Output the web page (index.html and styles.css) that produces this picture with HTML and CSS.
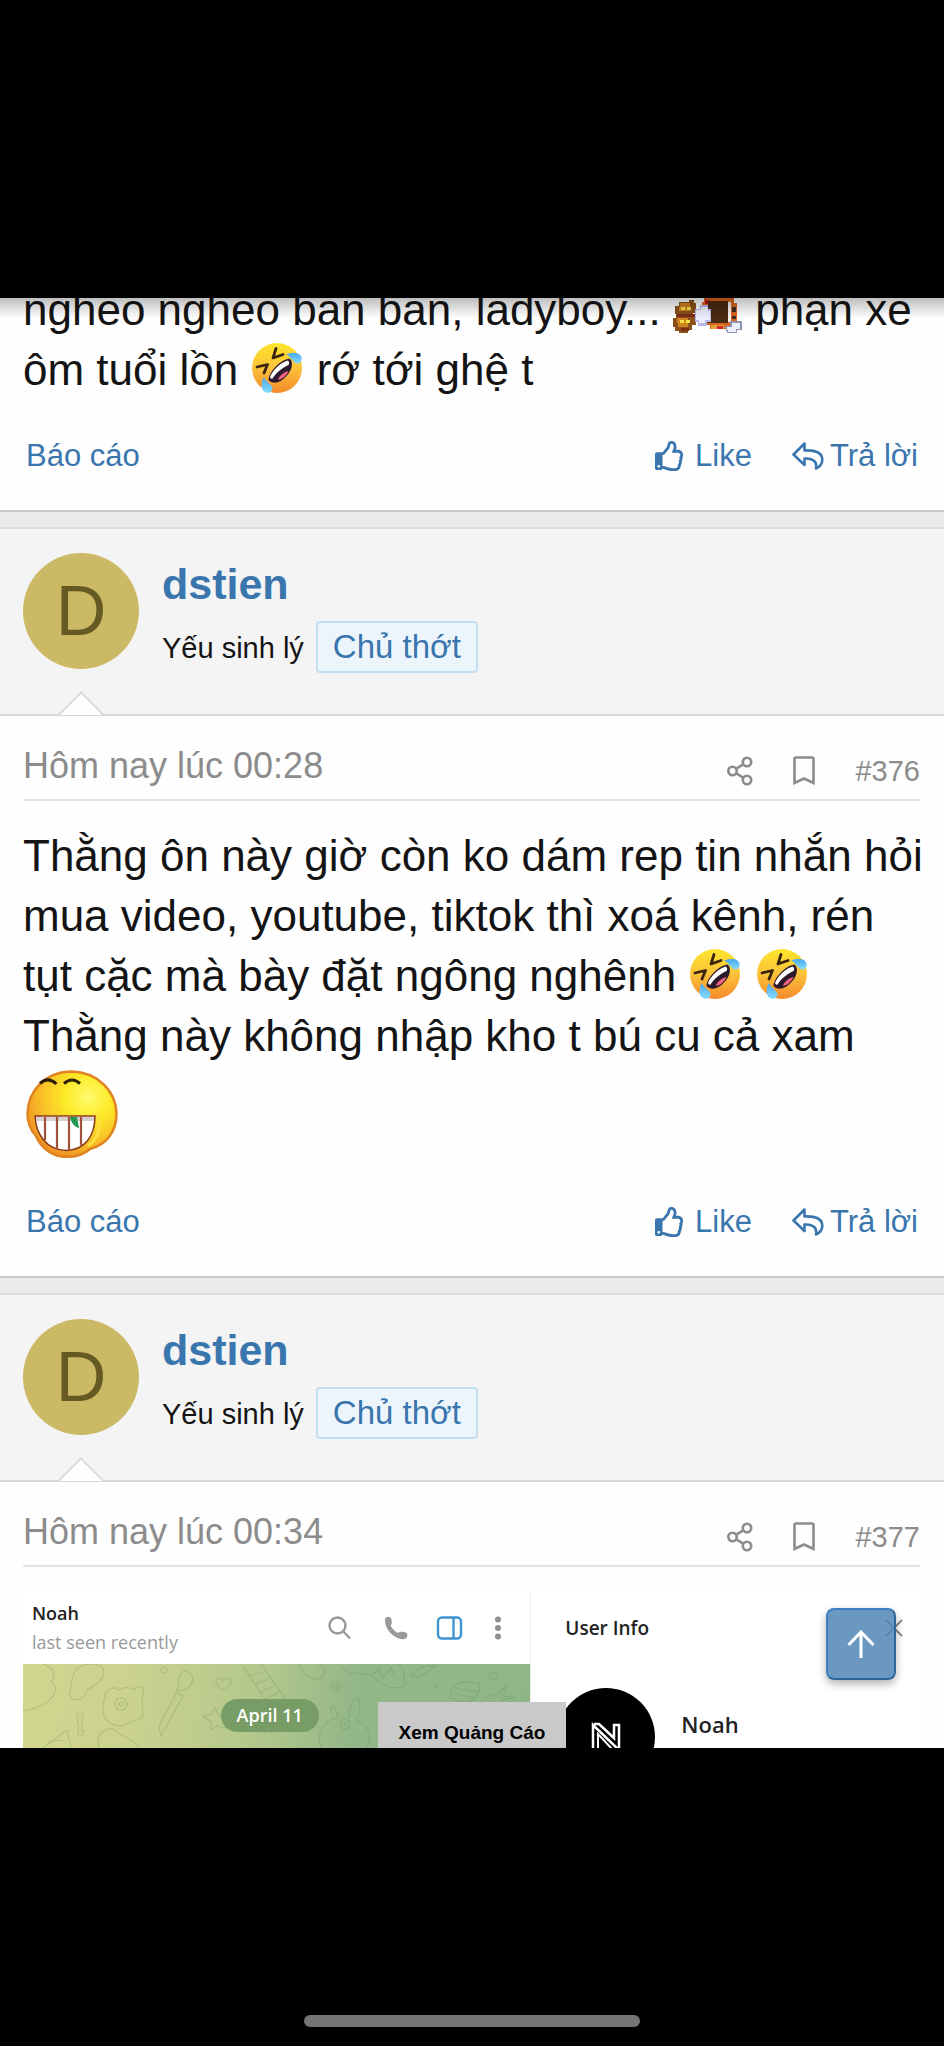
FILE: index.html
```
<!DOCTYPE html>
<html lang="vi">
<head>
    <meta charset="UTF-8">
    <meta name="viewport" content="width=device-width, initial-scale=1">
    <title>Thread</title>
    <link rel="stylesheet" href="styles.css">
</head>
<body>
    <!-- Shared icons -->
    <svg class="sprite" aria-hidden="true">
        <defs>
            <linearGradient id="faceFill" x1="0" y1="0" x2="0" y2="1">
                <stop offset="0" stop-color="#fee52c"/>
                <stop offset="0.5" stop-color="#fbc23a"/>
                <stop offset="1" stop-color="#f58a2c"/>
            </linearGradient>
            <linearGradient id="tearFill" x1="0" y1="0" x2="0" y2="1">
                <stop offset="0" stop-color="#4aa8ee"/>
                <stop offset="1" stop-color="#86dcfb"/>
            </linearGradient>
            <radialGradient id="grinFill" cx="0.68" cy="0.3" r="0.75">
                <stop offset="0" stop-color="#fffc6e"/>
                <stop offset="0.35" stop-color="#fdea28"/>
                <stop offset="0.75" stop-color="#f8b928"/>
                <stop offset="1" stop-color="#ee9324"/>
            </radialGradient>
        </defs>
        <symbol id="rofl" viewBox="0 0 50 50">
            <circle cx="25" cy="25" r="25" fill="url(#faceFill)"/>
            <path d="M24 5.500L21 15L31 11.500M5 24L15.500 21.500L12 30" fill="none" stroke="#3a2410" stroke-width="2.800" stroke-linejoin="round" stroke-linecap="round"/>
            <path d="M16.500 37C17 29 28 17 37.500 15.500C42 19 40 28 34 33.500C29 39.500 21 42 16.500 37Z" fill="#2b1a2e"/>
            <path d="M18 34C21 27 28 19.500 36 17.500C37.500 19 37.500 20.500 36.500 22C31 24 24 30 20.500 35.500C19.500 36 18.500 35.500 18 34Z" fill="#fff"/>
            <path d="M26 37C27 32.500 32 29 36.500 28C34.500 32.500 31 36 26 37Z" fill="#f0657d"/>
            <path d="M34 11.500C37 10 44 9 47.500 11.500C51 14 50 20 46 20.500C41 21 40 14 34 11.500Z" fill="url(#tearFill)"/>
            <path d="M12 34C9.500 37 8.500 45 11.500 48C14.500 51 20 50 20.500 46C21 41 14 40 12 34Z" fill="url(#tearFill)"/>
        </symbol>
        <symbol id="thumb" viewBox="0 0 512 512">
            <path d="M466.27 286.69C475.04 271.84 480 256 480 236.85c0-44.015-37.218-85.58-85.82-85.58H357.7c4.92-12.81 8.85-28.13 8.85-46.54C366.55 31.936 328.86 0 271.28 0c-61.607 0-58.093 94.933-71.76 108.6-22.747 22.747-49.615 66.447-68.76 83.4H32c-17.673 0-32 14.327-32 32v240c0 17.673 14.327 32 32 32h64c14.893 0 27.408-10.174 30.978-23.95 44.509 1.001 75.06 39.94 177.802 39.94 7.22 0 15.22.01 22.22.01 77.117 0 111.986-39.423 112.94-95.33 13.319-18.425 20.299-43.122 17.34-66.99 9.854-18.452 13.664-40.343 8.99-62.99zm-61.75 53.83c12.56 21.13 1.26 49.41-13.94 57.57 7.7 48.78-17.608 65.9-53.12 65.9h-37.82c-71.639 0-118.029-37.82-171.64-37.82V240h10.92c28.36 0 67.98-70.89 94.54-97.46 28.36-28.36 18.91-75.63 37.82-94.54 47.27 0 47.27 32.98 47.27 56.73 0 39.17-28.36 56.72-28.36 94.54h103.99c21.11 0 37.73 18.91 37.82 37.82.09 18.9-12.82 37.81-22.27 37.81 13.489 14.555 16.371 45.236-5.21 65.62zM88 432c0 13.255-10.745 24-24 24s-24-10.745-24-24 10.745-24 24-24 24 10.745 24 24z" fill="currentColor"/>
            <path d="M20 215H105V400H20Z" fill="currentColor"/>
        </symbol>
        <symbol id="reply" viewBox="0 0 32 28">
            <path d="M12.500 1.500L1.500 12.500L12.500 23V16.500C20 16 25.500 19 24 26.500C28.500 24.500 31 20.500 30 15.500C28.500 9.500 21 8 12.500 8.500Z" fill="none" stroke="currentColor" stroke-width="2.600" stroke-linejoin="round"/>
        </symbol>
        <symbol id="share" viewBox="0 0 26 30">
            <g fill="none" stroke="currentColor" stroke-width="2.600">
                <circle cx="5.500" cy="15" r="4.200"/>
                <circle cx="20" cy="6" r="4.200"/>
                <circle cx="20" cy="24" r="4.200"/>
                <path d="M9 12.800L16.500 8.200M9 17.200L16.500 21.800"/>
            </g>
        </symbol>
        <symbol id="bookmark" viewBox="0 0 22 30">
            <path d="M1.500 27V3Q1.500 1.500 3 1.500H19Q20.500 1.500 20.500 3V27L11 22.500Z" fill="none" stroke="currentColor" stroke-width="2.600"/>
        </symbol>
    </svg>

    <div class="screen">
        <div class="bar"></div>

        <main class="page">
            <!-- Post 375, scrolled partly out of view -->
            <article class="post post-first">
                <div class="message">
                    ngheo ngheo ban ban, ladyboy...
                    <svg class="smilie-pixel" viewBox="0 0 70 44" shape-rendering="crispEdges">
                        <path d="M6 12h10v-2h5v3h2v10h-3v2h3v10h-4v5h-4v3h-9v-2h-4v-4h-2v-9h3v-4h-1v-8h4z" fill="#8a5218"/>
                        <path d="M7 13h10v8h-11zM4 28h11v9h-10z" fill="#cf8420"/>
                        <path d="M4 24h18v3h-18zM8 38h8v3h-8z" fill="#7b2a16"/>
                        <path d="M8 17h4v3h-4zM14 17h4v3h-4zM7 30h4v3h-4zM13 30h4v3h-4z" fill="#f5e04a"/>
                        <path d="M31 8h30v5h3v18h-4v8h-23v-4h-3v-19h-5v-4h2z" fill="#d8661c"/>
                        <path d="M32 10h4v4h-4zM34 30h4v3h-4z" fill="#c2181c"/>
                        <path d="M35 11h20v22h-20z" fill="#4a2a12"/>
                        <path d="M55 12h3v20h-3z" fill="#f6f2ee"/>
                        <path d="M59 17h4v5h-4zM59 26h4v3h-4z" fill="#3d2c28"/>
                        <path d="M38 35h13v4h-13z" fill="#e8a03c"/>
                        <path d="M44 36h6v3h-6z" fill="#d3222a"/>
                        <path d="M22 19h5v-4h8v4h3v13h-4v4h-9v-4h-3z" fill="#b4b8ea"/>
                        <path d="M23 20h5v-3h7v4h2v9h-5v3h-6v-3h-3z" fill="#eceefc"/>
                        <path d="M52 36h5v-5h12v9h-5v3h-10z" fill="#8f93b4"/>
                        <path d="M54 37h5v-4h8v6h-4v3h-8z" fill="#eceefc"/>
                    </svg>
                    phạn xe<br>
                    ôm tuổi lồn
                    <svg class="emoji" role="img" aria-label="rofl"><use href="#rofl"/></svg>
                    rớ tới ghệ t
                </div>
                <footer class="actions">
                    <a href="#report">Báo cáo</a>
                    <div class="actions-right">
                        <a href="#like"><svg class="icon-like"><use href="#thumb"/></svg>Like</a>
                        <a href="#reply"><svg class="icon-reply"><use href="#reply"/></svg>Trả lời</a>
                    </div>
                </footer>
            </article>

            <!-- Post 376 -->
            <article class="post">
                <header class="user">
                    <a class="avatar" href="#dstien">D</a>
                    <div class="user-info">
                        <a class="user-name" href="#dstien">dstien</a>
                        <div class="user-meta">
                            <span>Yếu sinh lý</span>
                            <span class="badge">Chủ thớt</span>
                        </div>
                    </div>
                </header>
                <div class="attribution">
                    <time>Hôm nay lúc 00:28</time>
                    <div class="attribution-right">
                        <a href="#share" aria-label="Share"><svg class="icon-share"><use href="#share"/></svg></a>
                        <a href="#bookmark" aria-label="Bookmark"><svg class="icon-bookmark"><use href="#bookmark"/></svg></a>
                        <a class="number" href="#p376">#376</a>
                    </div>
                </div>
                <div class="message">
                    Thằng ôn này giờ còn ko dám rep tin nhắn hỏi<br>
                    mua video, youtube, tiktok thì xoá kênh, rén<br>
                    tụt cặc mà bày đặt ngông nghênh
                    <svg class="emoji" role="img" aria-label="rofl"><use href="#rofl"/></svg>
                    <svg class="emoji" role="img" aria-label="rofl"><use href="#rofl"/></svg><br>
                    Thằng này không nhập kho t bú cu cả xam
                    <svg class="smilie-grin" viewBox="0 0 92 88">
                        <path d="M46 1.500C70 2 90 20 90.500 44C90.500 62 80 75 64 79C56 86 46 87.500 36 86.500C24 85 14 76 10 66C3 58 1.500 50 1.500 44C2 20 20 1.500 46 1.500Z" fill="url(#grinFill)" stroke="#df8420" stroke-width="2.500"/>
                        <path d="M62 76C76 66 74 52 71 44" fill="none" stroke="#fbe040" stroke-width="3"/>
                        <path d="M9 46H69C69 67 58 80 40 80.500C20 80 10 64 9 46Z" fill="#fff" stroke="#8a3a1a" stroke-width="1.500"/>
                        <path d="M10 47H68V51H10Z" fill="#d8cfd0"/>
                        <path d="M19 47V70M31 47V79M43 47V80M55 47V75" stroke="#a0523c" stroke-width="2.200"/>
                        <path d="M44 47L51 47L53 58C48 57 45 52 44 47Z" fill="#1f9a50"/>
                        <path d="M14 13.500Q22 6 30.500 14M38 13.500Q46 6.500 54 13.500" fill="none" stroke="#2c2008" stroke-width="3"/>
                    </svg>
                </div>
                <footer class="actions">
                    <a href="#report">Báo cáo</a>
                    <div class="actions-right">
                        <a href="#like"><svg class="icon-like"><use href="#thumb"/></svg>Like</a>
                        <a href="#reply"><svg class="icon-reply"><use href="#reply"/></svg>Trả lời</a>
                    </div>
                </footer>
            </article>

            <!-- Post 377 -->
            <article class="post">
                <header class="user">
                    <a class="avatar" href="#dstien">D</a>
                    <div class="user-info">
                        <a class="user-name" href="#dstien">dstien</a>
                        <div class="user-meta">
                            <span>Yếu sinh lý</span>
                            <span class="badge">Chủ thớt</span>
                        </div>
                    </div>
                </header>
                <div class="attribution">
                    <time>Hôm nay lúc 00:34</time>
                    <div class="attribution-right">
                        <a href="#share" aria-label="Share"><svg class="icon-share"><use href="#share"/></svg></a>
                        <a href="#bookmark" aria-label="Bookmark"><svg class="icon-bookmark"><use href="#bookmark"/></svg></a>
                        <a class="number" href="#p377">#377</a>
                    </div>
                </div>
                <div class="chat">
                    <section class="chat-main">
                        <div class="chat-top">
                            <div class="chat-title">
                                <strong>Noah</strong>
                                <span>last seen recently</span>
                            </div>
                            <svg class="chat-icons" viewBox="0 0 174 24">
                                <g fill="none" stroke="#999" stroke-width="2.400">
                                    <circle cx="9.500" cy="9.500" r="8"/>
                                    <path d="M15.500 15.500L22 22.500"/>
                                </g>
                                <path d="M58 1.500C61 0 63 1 63.500 4C64 7 64 8 62.500 9.500C64.500 13 67 15.500 70 17C72 15.500 73 15.500 76 16C79 16.500 80 18 79 21C78 23 76 23.500 73 23C65 21.500 58 14 57 6C56.800 4 57 2.500 58 1.500Z" fill="#999"/>
                                <g fill="none" stroke="#3f93d0" stroke-width="2.400">
                                    <rect x="110" y="1.500" width="23" height="21" rx="4"/>
                                    <path d="M125.500 1.500V22.500"/>
                                </g>
                                <g fill="#8e8e8e">
                                    <circle cx="170" cy="3.500" r="3"/>
                                    <circle cx="170" cy="12" r="3"/>
                                    <circle cx="170" cy="20.500" r="3"/>
                                </g>
                            </svg>
                        </div>
                        <div class="chat-body">
                            <!-- wallpaper doodles -->
                            <svg class="doodles" viewBox="0 0 508 84" preserveAspectRatio="xMinYMin slice">
                                <g fill="none" stroke="#5c8046" stroke-opacity="0.22" stroke-width="1.200">
                                    <path d="M20 0C30 4 34 10 28 18C38 24 30 34 22 40C14 42 8 48 0 46M58 2C46 8 50 22 46 30C50 40 62 36 64 26C74 20 84 14 80 4C76 0 64 -2 58 2Z"/>
                                    <path d="M82 34C82 24 92 22 96 26C102 22 110 24 112 26C114 20 122 22 120 30C118 38 120 44 120 52C116 58 108 56 104 60C94 64 80 60 80 46C80 42 80 38 82 34ZM76 84C72 70 82 62 92 66C98 74 108 72 116 84"/>
                                    <circle cx="98" cy="40" r="6"/><circle cx="98" cy="40" r="2"/>
                                    <path d="M162 6L170 12C170 24 162 28 154 26C158 18 152 14 162 6ZM154 28L160 32L138 72L136 62ZM54 50h6l-1 12h-4zM55 66h5v5h-5zM20 84L44 66L48 84M24 78L40 76"/>
                                    <path d="M199 26C192 20 191 14 196 14C199 14 200 17 200 18C202 13 208 13 208 18C208 22 203 25 199 26Z"/>
                                    <path d="M220 2L248 44L262 34L238 0M226 12L240 8M232 20L246 15M238 28L250 22M242 36L256 28M180 52L188 50L192 44L196 51L204 50L200 58L203 64L194 62L188 66L188 58Z"/>
                                    <circle cx="141" cy="6" r="3"/><circle cx="312" cy="22" r="5"/><circle cx="312" cy="22" r="2"/><circle cx="470" cy="12" r="4"/><circle cx="413" cy="22" r="1"/>
                                    <path d="M276 0C280 12 292 20 300 12C304 6 300 2 296 0M318 2C326 14 338 6 350 12C358 24 374 26 382 22C380 12 384 4 374 0M348 12L356 4L360 14L368 4L372 14M388 12C396 2 404 2 412 2C404 10 396 14 388 12Z"/>
                                    <path d="M298 84C292 66 304 54 316 54C312 42 306 36 308 50M326 54C326 38 334 30 336 36C338 44 336 50 334 56C346 62 350 72 344 84"/>
                                    <circle cx="322" cy="60" r="5"/><circle cx="322" cy="60" r="1"/>
                                    <path d="M428 34C426 20 440 14 456 20C458 30 452 38 440 38ZM432 24L456 28M434 30L452 34M460 34L474 30L484 22L480 32L492 34L478 36L482 42M240 70L246 66L250 72M360 50C366 40 372 44 376 50"/>
                                </g>
                            </svg>
                            <span class="chat-date">April 11</span>
                        </div>
                    </section>
                    <aside class="chat-side">
                        <div class="side-title">
                            <span>User Info</span>
                            <svg class="icon-close" viewBox="0 0 18 18"><path d="M1 1L17 17M17 1L1 17" stroke="#8a8a8a" stroke-width="2"/></svg>
                        </div>
                        <div class="side-user">
                            <svg class="side-avatar" viewBox="0 0 98 98">
                                <circle cx="49" cy="49" r="49" fill="#000"/>
                                <path d="M36 62V37L62 62V37H57V50L42 36H37" fill="none" stroke="#fff" stroke-width="2.500"/>
                                <path d="M41 62V46L56 62" fill="none" stroke="#fff" stroke-width="2"/>
                            </svg>
                            <span>Noah</span>
                        </div>
                    </aside>
                </div>
            </article>

            <button type="button" class="go-top" aria-label="Top">
                <svg viewBox="0 0 28 28"><path d="M14 28V2M1.500 15L14 2L26.500 15" fill="none" stroke="#fff" stroke-width="3"/></svg>
            </button>
            <button type="button" class="ad">Xem Quảng Cáo</button>
        </main>

        <div class="bar bar-bottom">
            <div class="home-indicator"></div>
        </div>
    </div>
</body>
</html>
```
FILE: styles.css
```
* {
    box-sizing: border-box;
}
body {
    margin: 0;
    background: #000;
    color: #141414;
    font-family: "Liberation Sans", Arial, sans-serif;
}
a {
    color: #3a76ae;
    text-decoration: none;
}
svg {
    flex: none;
}
.sprite {
    position: absolute;
    width: 0;
    height: 0;
}
.screen {
    display: flex;
    flex-direction: column;
    height: 100vh;
}
.bar {
    flex: none;
    height: 298px;
    background: #000;
}
.bar-bottom {
    display: flex;
    justify-content: center;
    align-items: flex-end;
    padding-bottom: 19px;
}
.home-indicator {
    width: 336px;
    height: 12px;
    border-radius: 6px;
    background: #747474;
}

/* Forum page */
.page {
    position: relative;
    flex: 1;
    min-height: 0;
    overflow: hidden;
    background: #ebebeb;
}
/* shadow under the top edge */
.page::before {
    content: "";
    position: absolute;
    top: 0;
    left: 0;
    right: 0;
    height: 20px;
    background: linear-gradient(rgba(0, 0, 0, 0.25), rgba(0, 0, 0, 0));
}
.post {
    margin-bottom: 15px;
    background: #fefefe;
    border-top: 2px solid #dcdcdc;
    border-bottom: 2px solid #c9c9c9;
}
.post-first {
    margin-top: -45px;
}

/* User header */
.user {
    position: relative;
    display: flex;
    gap: 23px;
    padding: 24px 24px 41px 23px;
    background: #f4f4f4;
    border-bottom: 2px solid #d8d8d8;
}
.user::after {
    content: "";
    position: absolute;
    left: 64px;
    bottom: -18px;
    width: 32px;
    height: 32px;
    background: #fefefe;
    border-top: 2px solid #d8d8d8;
    border-left: 2px solid #d8d8d8;
    transform: rotate(45deg);
    clip-path: polygon(0 0, 100% 0, 0 100%);
}
.avatar {
    flex: none;
    width: 116px;
    height: 116px;
    border-radius: 50%;
    background: #ccb966;
    color: #665a24;
    font-size: 70px;
    line-height: 116px;
    text-align: center;
}
.user-info {
    padding-top: 7px;
}
.user-name {
    display: block;
    margin-bottom: 13px;
    font-size: 43px;
    font-weight: bold;
    line-height: 48px;
}
.user-meta {
    display: flex;
    align-items: baseline;
    gap: 12px;
    font-size: 29px;
}
.badge {
    padding: 0 15px;
    border: 2px solid #c3def1;
    border-radius: 4px;
    background: #edf5fc;
    color: #3a76ae;
    font-size: 33px;
    line-height: 48px;
}

/* Date row */
.attribution {
    display: flex;
    justify-content: space-between;
    align-items: flex-end;
    margin: 0 24px 0 23px;
    padding: 28px 0 11px;
    border-bottom: 2px solid #e4e4e4;
    color: #8c8c8c;
    font-size: 36px;
    line-height: 44px;
}
.attribution-right {
    display: flex;
    align-items: center;
    gap: 40px;
}
.attribution-right a {
    display: flex;
    color: #8c8c8c;
}
.attribution-right .number {
    font-size: 29px;
    line-height: 34px;
}
.icon-share {
    width: 26px;
    height: 30px;
}
.icon-bookmark {
    width: 22px;
    height: 30px;
}

/* Message */
.message {
    padding: 25px 0 0 23px;
    font-size: 44px;
    line-height: 60px;
    white-space: nowrap;
}
.emoji {
    width: 50px;
    height: 50px;
    margin: 0 2px;
    vertical-align: -8px;
}
.smilie-pixel {
    width: 70px;
    height: 44px;
    vertical-align: -9px;
}
.smilie-grin {
    display: block;
    width: 92px;
    height: 88px;
    margin: 4px 3px 8px;
}
.actions {
    display: flex;
    justify-content: space-between;
    padding: 36px 26px 34px;
    font-size: 31px;
    line-height: 40px;
}
.actions-right {
    display: flex;
    gap: 40px;
}
.actions a {
    display: flex;
    align-items: center;
}
.icon-like {
    width: 30px;
    height: 30px;
    margin-right: 10px;
}
.icon-reply {
    width: 32px;
    height: 28px;
    margin-right: 6px;
}

/* Attached chat window */
.chat {
    display: grid;
    grid-template-columns: 17fr 13fr;
    margin: 24px 24px 0 23px;
    background: #fff;
    color: #222;
    font-family: "Open Sans", "Noto Sans", sans-serif;
}
.chat-main {
    border-right: 1px solid #ececec;
}
.chat-top {
    display: flex;
    align-items: center;
    justify-content: space-between;
    height: 73px;
    padding: 0 28px 0 9px;
}
.chat-title strong {
    display: block;
    font-size: 18px;
    font-weight: 600;
    line-height: 29px;
}
.chat-title span {
    display: block;
    color: #999;
    font-size: 18px;
    line-height: 29px;
}
.chat-icons {
    width: 174px;
    height: 24px;
}
.chat-body {
    position: relative;
    display: flex;
    justify-content: center;
    align-items: flex-start;
    height: 400px;
    padding: 35px 14px 0 0;
    background: linear-gradient(95deg, #d1d68f 0%, #cbd28f 20%, #b2c78c 45%, #93b788 62%, #8fb587 100%);
}
.doodles {
    position: absolute;
    top: 0;
    left: 0;
    width: 100%;
    height: 84px;
}
.chat-date {
    position: relative;
    padding: 0 16px;
    border-radius: 17px;
    background: #779c65;
    color: #fff;
    font-size: 18px;
    font-weight: 600;
    line-height: 33px;
}
.chat-side {
    font-weight: 600;
}
.side-title {
    display: flex;
    align-items: center;
    justify-content: space-between;
    height: 73px;
    padding: 0 17px 0 34px;
    font-size: 19px;
}
.icon-close {
    width: 18px;
    height: 18px;
}
.side-user {
    display: flex;
    align-items: flex-start;
    gap: 26px;
    padding: 24px 0 0 26px;
    font-size: 22px;
    line-height: 72px;
}
.side-avatar {
    width: 98px;
    height: 98px;
}

/* Floating controls */
.go-top {
    position: absolute;
    right: 48px;
    bottom: 68px;
    display: flex;
    align-items: center;
    justify-content: center;
    width: 70px;
    height: 72px;
    padding: 0;
    border: 2px solid;
    border-color: #3d80bd #2f6698 #2f6698 #3d80bd;
    border-radius: 8px;
    background: rgba(83, 135, 183, 0.86);
    box-shadow: 0 4px 8px rgba(0, 0, 0, 0.3);
}
.go-top svg {
    width: 28px;
    height: 28px;
}
.ad {
    position: absolute;
    bottom: 0;
    left: 40%;
    width: 20%;
    height: 46px;
    padding: 16px 0 0;
    border: 0;
    background: #c9c9c9;
    color: #000;
    font-family: "Liberation Sans", Arial, sans-serif;
    font-size: 19px;
    font-weight: bold;
    white-space: nowrap;
}
```
